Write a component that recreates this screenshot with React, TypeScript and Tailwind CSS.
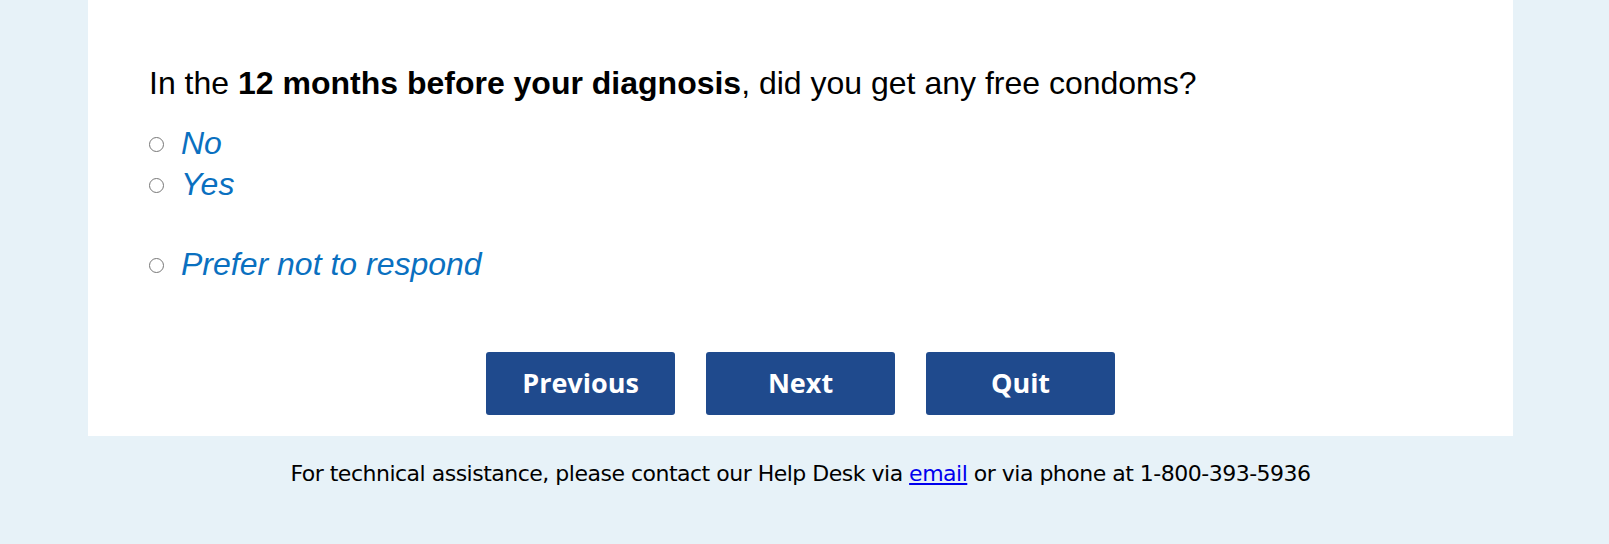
export default function App() {
  const options = ["No", "Yes"];

  return (
    <div className="min-h-[544px] bg-[#e7f2f8]">
      <div className="ml-[88px] w-[1425px]">
        {/* Question panel */}
        <div className="bg-white h-[436px] pt-[63px] pl-[61px]">
          <p className="font-['Liberation_Sans',Arial,sans-serif] text-[32px] leading-[40px] text-black">
            In the <b>12 months before your diagnosis</b>, did you get any free condoms?
          </p>

          <div className="mt-[19px] font-['Liberation_Sans',Arial,sans-serif] italic text-[32px] text-[#0a70c0]">
            {options.map((o) => (
              <label key={o} className="flex items-center h-[41px] gap-[17px]">
                <input type="radio" name="q" className="w-[15px] h-[15px] m-0 mt-[3px]" />
                <span>{o}</span>
              </label>
            ))}
            <div className="h-[39px]" />
            <label className="flex items-center h-[41px] gap-[17px]">
              <input type="radio" name="q" className="w-[15px] h-[15px] m-0 mt-[3px]" />
              <span>Prefer not to respond</span>
            </label>
          </div>

          <div className="flex justify-center gap-[31px] mt-[68px] pr-[61px]">
            {["Previous", "Next", "Quit"].map((b) => (
              <button
                key={b}
                className="w-[189px] h-[63px] rounded-[3px] bg-[#1f4a8d] text-white font-['Open_Sans',sans-serif] font-bold text-[27px]"
              >
                {b}
              </button>
            ))}
          </div>
        </div>

        {/* Footer */}
        <p className="mt-[21px] text-center font-['DejaVu_Sans',Tahoma,sans-serif] text-[22px] tracking-[-0.5px] text-black">
          For technical assistance, please contact our Help Desk via{" "}
          <a href="#" className="text-[#0000ee] underline">email</a> or via phone at 1-800-393-5936
        </p>
      </div>
    </div>
  );
}
